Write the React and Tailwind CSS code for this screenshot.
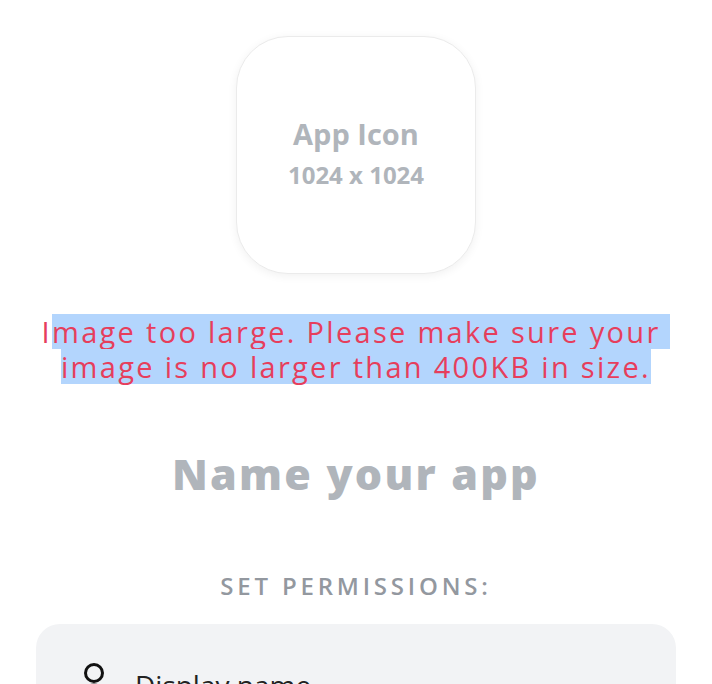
const App = () => {
  return (
    <main
      className="w-full min-h-screen bg-white flex flex-col items-center overflow-hidden"
      style={{ fontFamily: '"Open Sans", "Noto Sans", sans-serif' }}
    >
      <div className="mt-[36px] w-[240px] h-[238px] rounded-[52px] border border-[#ebebeb] bg-white shadow-[0_2px_10px_rgba(0,0,0,0.06)] flex flex-col items-center justify-center pb-[5px]">
        <p className="text-[29px] leading-[34px] font-bold text-[#b0b5bb]">App Icon</p>
        <p className="mt-[10px] text-[24px] leading-[28px] font-bold text-[#b0b5bb]">1024 x 1024</p>
      </div>

      <div className="mt-[40px] flex flex-col items-center text-[29px] leading-[35px] tracking-[2.3px] text-[#e63e5c]">
        <p>
          I<span className="inline-block bg-[#b3d5fd]">mage too large. Please make sure your&nbsp;</span>
        </p>
        <p>
          <span className="inline-block bg-[#b3d5fd]">image is no larger than 400KB in size.</span>
        </p>
      </div>

      <h1 className="mt-[60px] text-[43px] leading-[60px] font-extrabold tracking-[2.2px] text-[#b0b5bb]">Name your app</h1>

      <p className="mt-[67px] text-[24px] leading-[30px] font-semibold tracking-[3.8px] text-[#93989f]">
        SET PERMISSIONS:
      </p>

      <div className="mt-[23px] w-[640px] rounded-3xl bg-[#f2f3f5] px-[44px] pt-[39px] pb-6">
        <div className="flex items-start gap-[27px]">
          <svg width="28" height="34" viewBox="0 0 28 34" fill="none" stroke="#111" strokeWidth="3">
            <circle cx="14" cy="10" r="8.5" />
            <path d="M3 33c0-7 5-11 11-11s11 4 11 11" />
          </svg>
          <span className="mt-[4px] text-[28px] leading-[36px] text-[#222]">Display name</span>
        </div>
      </div>
    </main>
  )
}

export default App
